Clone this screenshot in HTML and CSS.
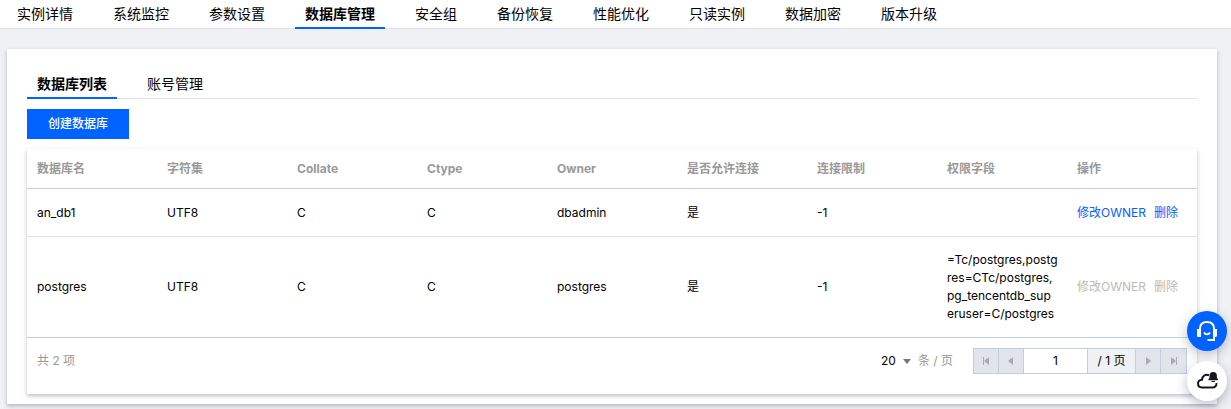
FILE: index.html
```html
<!DOCTYPE html>
<html lang="zh-CN">
<head>
    <meta charset="UTF-8">
    <meta name="viewport" content="width=device-width, initial-scale=1.0">
    <title>数据库管理</title>
    <link rel="stylesheet" href="styles.css">
</head>
<body>
    <nav class="main-nav">
        <a href="#">实例详情</a>
        <a href="#">系统监控</a>
        <a href="#">参数设置</a>
        <a href="#" class="active">数据库管理</a>
        <a href="#">安全组</a>
        <a href="#">备份恢复</a>
        <a href="#">性能优化</a>
        <a href="#">只读实例</a>
        <a href="#">数据加密</a>
        <a href="#">版本升级</a>
    </nav>

    <main class="card">
        <nav class="sub-nav">
            <a href="#" class="active">数据库列表</a>
            <a href="#">账号管理</a>
        </nav>
        <button type="button" class="btn">创建数据库</button>

        <div class="table-box">
            <table>
                <thead>
                    <tr>
                        <th>数据库名</th>
                        <th>字符集</th>
                        <th>Collate</th>
                        <th>Ctype</th>
                        <th>Owner</th>
                        <th>是否允许连接</th>
                        <th>连接限制</th>
                        <th>权限字段</th>
                        <th>操作</th>
                    </tr>
                </thead>
                <tbody>
                    <tr>
                        <td>an_db1</td>
                        <td>UTF8</td>
                        <td>C</td>
                        <td>C</td>
                        <td>dbadmin</td>
                        <td>是</td>
                        <td>-1</td>
                        <td></td>
                        <td>
                            <div class="actions">
                                <a href="#">修改OWNER</a>
                                <a href="#">删除</a>
                            </div>
                        </td>
                    </tr>
                    <tr>
                        <td>postgres</td>
                        <td>UTF8</td>
                        <td>C</td>
                        <td>C</td>
                        <td>postgres</td>
                        <td>是</td>
                        <td>-1</td>
                        <td>=Tc/postgres,postg<br>res=CTc/postgres,<br>pg_tencentdb_sup<br>eruser=C/postgres</td>
                        <td>
                            <div class="actions disabled">
                                <a href="#" aria-disabled="true">修改OWNER</a>
                                <a href="#" aria-disabled="true">删除</a>
                            </div>
                        </td>
                    </tr>
                </tbody>
            </table>

            <div class="table-footer">
                <span class="muted">共 2 项</span>
                <div class="page-size">
                    <select id="pageSize">
                        <option>20</option>
                        <option>50</option>
                    </select>
                    <svg class="caret" width="8" height="5" viewBox="0 0 8 5"><path d="M0 0h8L4 5z"/></svg>
                    <label for="pageSize" class="muted">条 / 页</label>
                </div>
                <div class="pager">
                    <button type="button" aria-label="首页" disabled>
                        <svg width="8" height="8" viewBox="0 0 8 8"><path d="M1 0h1v8H1zM7 0v8L2 4z"/></svg>
                    </button>
                    <button type="button" aria-label="上一页" disabled>
                        <svg width="8" height="8" viewBox="0 0 8 8"><path d="M6 0v8L1 4z"/></svg>
                    </button>
                    <input type="text" value="1" aria-label="页码">
                    <span class="total">/ 1 页</span>
                    <button type="button" aria-label="下一页" disabled>
                        <svg width="8" height="8" viewBox="0 0 8 8"><path d="M2 0v8l5-4z"/></svg>
                    </button>
                    <button type="button" aria-label="末页" disabled>
                        <svg width="8" height="8" viewBox="0 0 8 8"><path d="M1 0v8l5-4zM6 0h1v8H6z"/></svg>
                    </button>
                </div>
            </div>
        </div>
    </main>

    <!-- Floating buttons -->
    <div class="float-bar">
        <button type="button" class="support" aria-label="客服">
            <svg width="20" height="20" viewBox="0 0 20 20" fill="none" stroke="#fff" stroke-width="2">
                <path d="M3 9V7.500Q3 1 10 1t7 6.500V19H10.500"/>
                <path d="M0 8h4v8H1.500Q0 16 0 14.500zM20 8h-4v8h2.500q1.500 0 1.500-1.500z" fill="#fff" stroke="none"/>
                <path d="M7 11.500c1.300 2.400 4.700 2.400 6 0" stroke-width="1.800"/>
            </svg>
        </button>
        <button type="button" class="cloud" aria-label="通知">
            <svg width="22" height="20" viewBox="0 0 22 20">
                <path d="M13 4.200C9.500 2.800 6 5 6 8.700 3.700 8.900 2 10.400 2 12.600 2 15 3.800 16.500 6 16.500H16.500c2.500 0 4.300-1.700 3.900-4.500" fill="none" stroke="#16181d" stroke-width="2"/>
                <path d="M12.500 9.300V8l1-1V4.800a3.700 3.700 0 0 1 7.400 0V7l1 1v1.300zM15.500 10h3.500v1h-3.500z" fill="#16181d" stroke="#fff" stroke-width="1" paint-order="stroke"/>
            </svg>
        </button>
    </div>
</body>
</html>
```

FILE: styles.css
```css
* {
    box-sizing: border-box;
}

body {
    margin: 0;
    background-color: #f0f1f5;
    color: #000;
    font-family: Inter, "Noto Sans CJK SC", sans-serif;
    font-size: 12px;
    line-height: 18px;
}

a {
    color: inherit;
    text-decoration: none;
}

button,
input,
select {
    font: inherit;
    color: inherit;
}

.main-nav,
.sub-nav {
    display: flex;
    gap: 20px;
    border-bottom: 1px solid #dfe1ea;
    font-size: 14px;
    line-height: 20px;
}

.main-nav {
    padding: 0 7px;
    background-color: #fff;
}

.main-nav a,
.sub-nav a {
    padding: 4px 10px;
    margin-bottom: -1px;
    border-bottom: 2px solid transparent;
    height: 29px;
}

.main-nav .active,
.sub-nav .active {
    border-bottom-color: #0062ff;
    font-weight: bold;
}

.card {
    margin: 20px 14px 5px 7px;
    padding: 21px 20px 10px;
    background-color: #fff;
    box-shadow: 0 2px 4px rgba(40, 45, 80, 0.3);
}

.btn {
    display: block;
    width: 102px;
    height: 30px;
    margin: 10px 0;
    padding: 0;
    border: none;
    background-color: #0062ff;
    color: #fff;
    font-weight: 500;
    cursor: pointer;
}

.table-box {
    background-color: #fff;
    box-shadow: 0 2px 4px rgba(40, 45, 80, 0.3);
}

table {
    width: 100%;
    table-layout: fixed;
    border-collapse: separate;
    border-spacing: 0;
}

th,
td {
    padding: 14px 10px;
    border-bottom: 1px solid #dfe1ea;
    text-align: left;
    vertical-align: middle;
}

th {
    padding: 10px;
    height: 40px;
    border-bottom-color: #c5ccdb;
    color: #999;
    font-weight: bold;
}

td {
    height: 48px;
    padding-right: 0;
}

tr:last-child td {
    border-bottom-color: #c5ccdb;
}

.actions {
    display: flex;
    gap: 8px;
    color: #0062ff;
    white-space: nowrap;
}

.actions.disabled {
    color: #bbb;
}

.muted {
    color: #999;
}

.table-footer {
    display: flex;
    align-items: center;
    padding: 10px 10px 20px;
}

.page-size {
    display: flex;
    align-items: center;
    gap: 7px;
    margin-left: auto;
    margin-right: 20px;
}

.page-size select {
    appearance: none;
    padding: 0;
    border: none;
    background: none;
}

.caret {
    fill: #777;
}

.pager {
    display: flex;
    height: 26px;
    border: 1px solid #c5ccdb;
}

.pager > * {
    border: none;
    border-right: 1px solid #c5ccdb;
}

.pager > :last-child {
    border-right: none;
}

.pager button {
    display: flex;
    align-items: center;
    justify-content: center;
    width: 25px;
    padding: 0;
    background-color: #e1e4eb;
}

.pager svg {
    fill: #aaa;
}

.pager input {
    width: 64px;
    padding: 0;
    text-align: center;
}

.pager .total {
    width: 48px;
    background-color: #f0f1f5;
    line-height: 24px;
    text-align: center;
}

/* Floating buttons */
.float-bar {
    position: fixed;
    right: 4px;
    bottom: 8px;
    display: flex;
    flex-direction: column;
    gap: 10px;
}

.float-bar button {
    display: flex;
    align-items: center;
    justify-content: center;
    width: 40px;
    height: 40px;
    padding: 0;
    border: none;
    border-radius: 50%;
    background-color: #fff;
    box-shadow: 0 4px 12px rgba(40, 45, 80, 0.3);
    cursor: pointer;
}

.float-bar .support {
    background-color: #0062ff;
}
```
